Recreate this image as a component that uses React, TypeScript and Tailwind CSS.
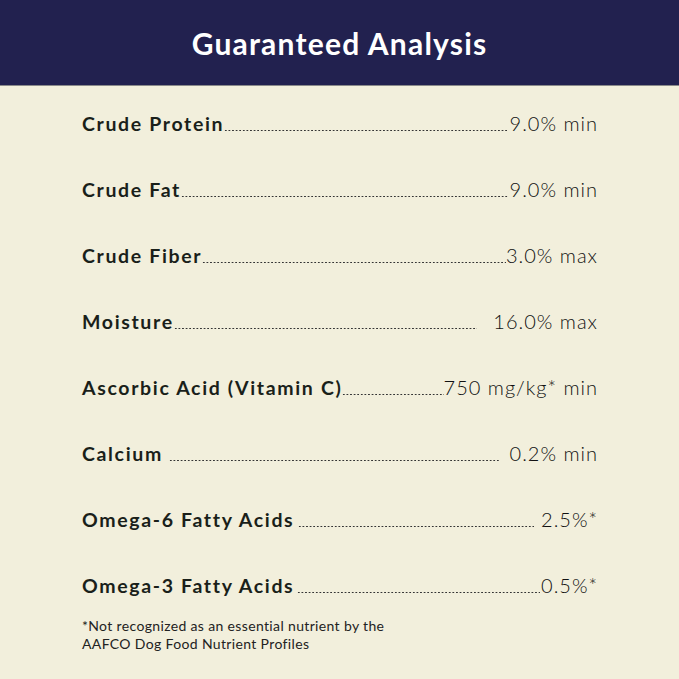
const ROWS = [
  { label: "Crude Protein", value: "9.0% min", gapL: 0, gapR: 2 },
  { label: "Crude Fat", value: "9.0% min", gapL: 0, gapR: 2 },
  { label: "Crude Fiber", value: "3.0% max", gapL: 0, gapR: 0 },
  { label: "Moisture", value: "16.0% max", gapL: 0, gapR: 16 },
  { label: "Ascorbic Acid (Vitamin C)", value: "750 mg/kg* min", gapL: 0, gapR: 0 },
  { label: "Calcium", value: "0.2% min", gapL: 6, gapR: 10 },
  { label: "Omega-6 Fatty Acids", value: "2.5%*", gapL: 4, gapR: 7 },
  { label: "Omega-3 Fatty Acids", value: "0.5%*", gapL: 3, gapR: 1 },
]

function Row({ label, value, gapL, gapR }: { label: string; value: string; gapL: number; gapR: number }) {
  return (
    <div className="flex items-end h-[66px] pb-[21px]">
      <span className="text-[19.5px] font-bold text-[#1a1f1a] leading-none tracking-[1.65px]">{label}</span>
      <span
        className="flex-1 h-[3px] mb-[1px] bg-[radial-gradient(circle,#333_0.5px,transparent_0.85px)] bg-[length:3.6px_3px] bg-repeat-x"
        style={{ marginLeft: gapL, marginRight: gapR }}
      />
      <span className="text-[20px] font-light text-[#111] leading-none tracking-[1px]">{value}</span>
    </div>
  )
}

export default function App() {
  return (
    <div className="w-[679px] h-[679px] bg-[#f2efdc] font-['Lato',sans-serif] overflow-hidden">
      <div className="h-[86px] bg-[#22214f] border-b border-[#8a8a8a] flex items-center justify-center">
        <h1 className="text-white text-[30px] font-bold tracking-[1.2px] leading-none">Guaranteed Analysis</h1>
      </div>

      <div className="pl-[82px] pr-[81px] pt-[2px]">
        {ROWS.map(r => (
          <Row key={r.label} {...r} />
        ))}

        <div className="text-[14px] text-[#222] leading-[18px] tracking-[0.35px] mt-[1px]">
          <p>*Not recognized as an essential nutrient by the</p>
          <p>AAFCO Dog Food Nutrient Profiles</p>
        </div>
      </div>
    </div>
  )
}
